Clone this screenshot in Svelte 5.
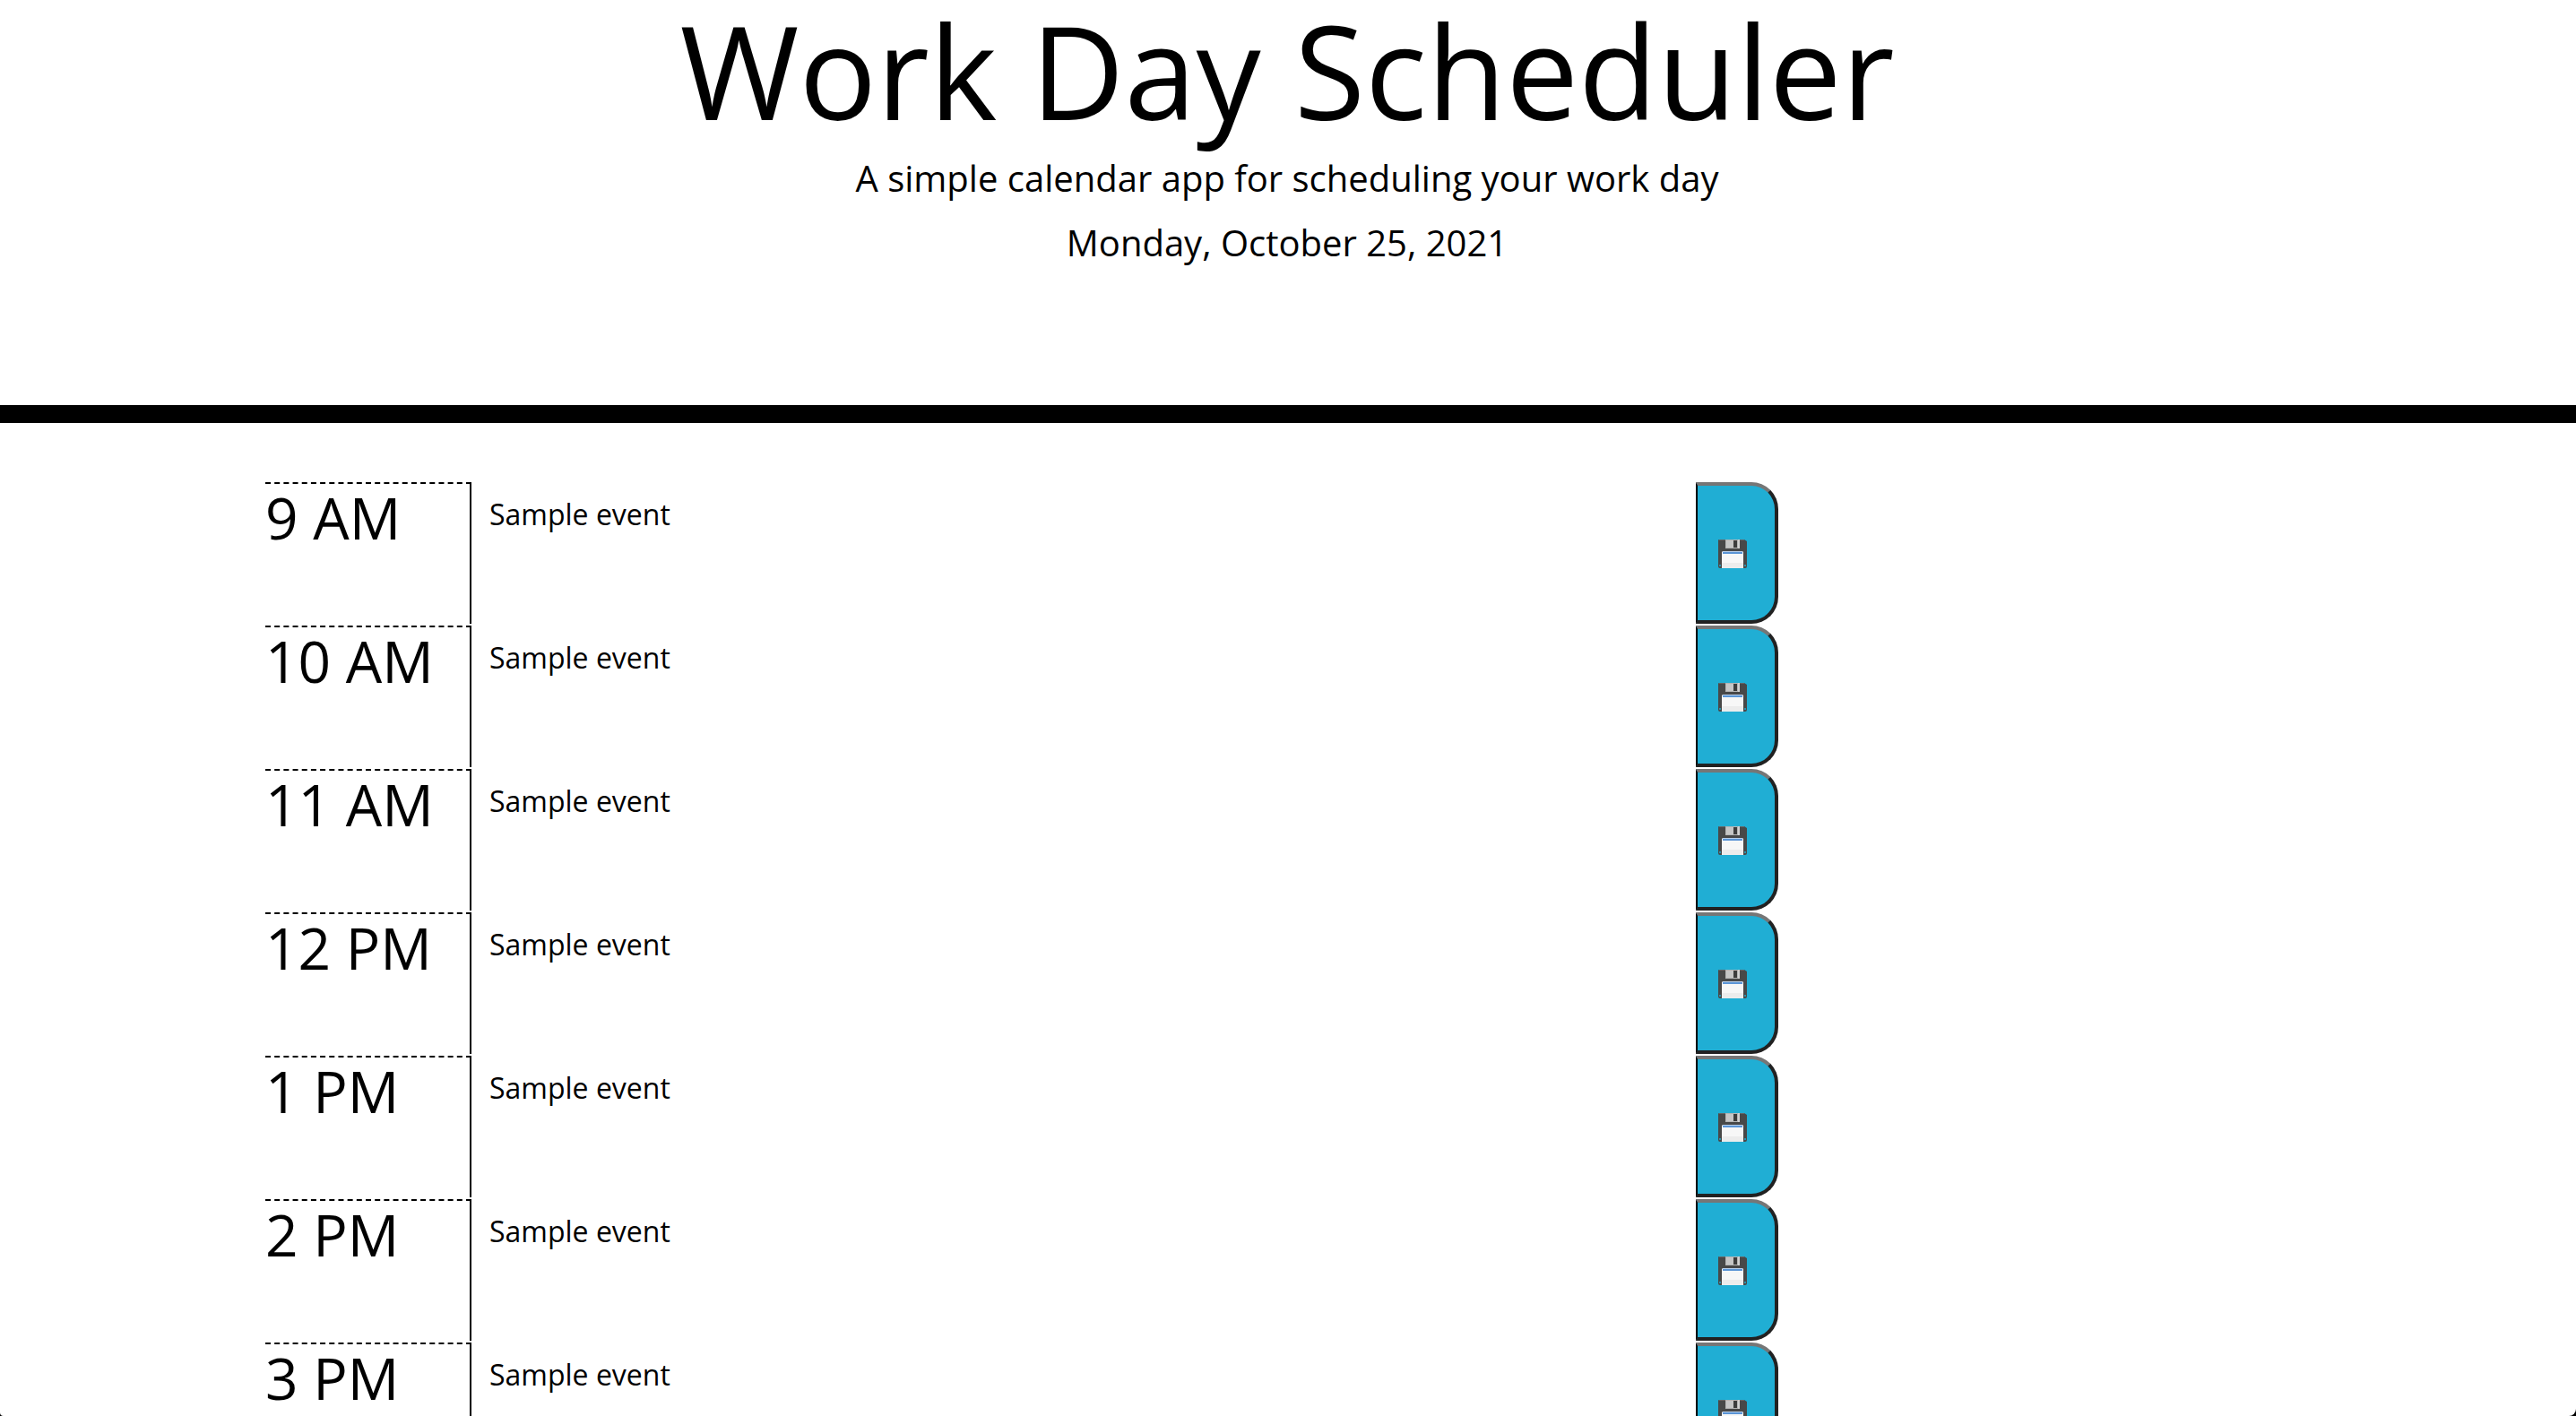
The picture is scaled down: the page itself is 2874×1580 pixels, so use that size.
<script>
  let events = $state(
    ['9 AM', '10 AM', '11 AM', '12 PM', '1 PM', '2 PM', '3 PM'].map((hour) => ({
      hour,
      text: 'Sample event'
    }))
  );
</script>

<div class="page">
  <header>
    <h1>Work Day Scheduler</h1>
    <p>A simple calendar app for scheduling your work day</p>
    <p>Monday, October 25, 2021</p>
  </header>

  <main>
    {#each events as event, i}
      <div class="row">
        <label class="hour" for="event-{i}">{event.hour}</label>
        <textarea id="event-{i}" bind:value={event.text}></textarea>
        <button type="button" aria-label="Save {event.hour}">
          <svg viewBox="0 0 32 32" aria-hidden="true">
            <path d="M1 0H29L32 2V30Q32 32 30 32H2Q0 32 0 30V1Q0 0 1 0Z" fill="#484848" />
            <path d="M1 0H29V1H1Z" fill="#666" />
            <path d="M8 0H24V10H8Z" fill="#b4b4b4" />
            <path d="M9 1H17V9H9Z" fill="#c6c6c6" />
            <path d="M17 1H21V9H17Z" fill="#3c3c3c" />
            <path d="M22 0H24V10H22Z" fill="#d2d2d2" />
            <path d="M5 13H27L28 14V32H4V14Z" fill="#f7f7f7" />
            <path d="M5 13H27V14H5Z" fill="#b9d0ec" />
            <path d="M5 14H27V16H5Z" fill="#5b95d6" />
            <path d="M4 26H28V32H4Z" fill="#ececec" />
            <path d="M1 28H3V30H1ZM29 28H31V30H29Z" fill="#2b93ad" />
          </svg>
        </button>
      </div>
    {/each}
  </main>
</div>

<style>
  :global(html) {
    background: #000;
  }

  :global(body) {
    margin: 0;
  }

  .page {
    height: 100vh;
    overflow: hidden;
    border-radius: 0 0 8px 4px;
    background: #fff;
    color: #000;
    font-family: 'Open Sans', sans-serif;
  }

  header {
    display: flex;
    flex-direction: column;
    gap: 12px;
    padding: 0 2px 151px 0;
    border-bottom: 20px solid #000;
    text-align: center;
  }

  h1,
  p {
    margin: 0;
    font-weight: 400;
  }

  h1 {
    padding-bottom: 1px;
    font-size: 144px;
    line-height: 156px;
  }

  p {
    font-size: 40px;
    line-height: 60px;
  }

  main {
    display: flex;
    flex-direction: column;
    gap: 2px;
    box-sizing: border-box;
    max-width: 2282px;
    margin: 0 auto;
    padding-top: 66px;
  }

  .row {
    display: grid;
    grid-template-columns: 230px minmax(0, 1366px) 92px;
    height: 158px;
  }

  .hour {
    border-top: 2px dashed #000;
    border-right: 2px solid #000;
    font-size: 64px;
    line-height: 76px;
  }

  textarea {
    box-sizing: border-box;
    height: 100%;
    padding: 12px 20px;
    border: 0;
    outline: 0;
    resize: none;
    background: transparent;
    color: inherit;
    font: inherit;
    font-size: 32px;
    line-height: 48px;
  }

  button {
    display: flex;
    align-items: center;
    justify-content: center;
    padding: 2px 8px 0 0;
    border-style: solid;
    border-width: 4px 4px 4px 2px;
    border-color: #767676 #212121 #212121 #000;
    border-radius: 0 30px 30px 0;
    background: #20aed4;
    cursor: pointer;
  }

  svg {
    width: 32px;
    height: 32px;
  }
</style>
